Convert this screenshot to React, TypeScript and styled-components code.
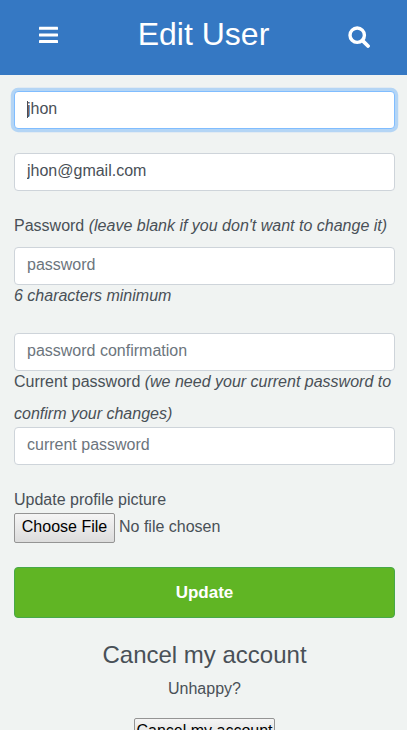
import React from "react";
import styled, { createGlobalStyle } from "styled-components";

const GlobalStyle = createGlobalStyle`
  *, *::before, *::after { box-sizing: border-box; }
  html, body { height: 100%; }
  body {
    margin: 0;
    overflow: hidden;
    background: #f0f3f2;
    color: #495057;
    font-family: "Liberation Sans", Arial, sans-serif;
    font-size: 16px;
  }
`;

const Page = styled.div`
  height: 730px;
  overflow: hidden;
`;

const Header = styled.header`
  display: flex;
  justify-content: space-between;
  align-items: flex-start;
  height: 75px;
  padding: 0 37px 0 37px;
  background: #3578c3;
  color: #fff;
`;

const Title = styled.h1`
  margin: 15px 0 0;
  font-size: 32px;
  line-height: 38px;
  font-weight: 400;
`;

const IconButton = styled.button<{ $top: number }>`
  display: flex;
  margin: ${(p) => p.$top}px 0 0;
  padding: 0;
  border: 0;
  background: none;
  color: inherit;
`;

const Form = styled.form`
  display: flex;
  flex-direction: column;
  padding: 16px 12px 0 14px;
`;

const Field = styled.div<{ $gap?: number }>`
  position: relative;
  display: flex;
  margin-bottom: ${(p) => p.$gap ?? 0}px;
`;

const TextInput = styled.input<{ $focused?: boolean }>`
  width: 100%;
  height: 38px;
  padding: 5px 12px 7px;
  border: 1px solid ${(p) => (p.$focused ? "#80bdff" : "#ced4da")};
  border-radius: 4px;
  outline: none;
  background: #fff;
  box-shadow: ${(p) => (p.$focused ? "0 0 0 3.2px rgba(0, 123, 255, 0.25)" : "none")};
  color: #495057;
  font: inherit;
  line-height: 24px;

  &::placeholder {
    color: #6c757d;
    opacity: 1;
  }
`;

const Caret = styled.span`
  position: absolute;
  left: 13px;
  top: 10px;
  width: 1px;
  height: 17px;
  background: #495057;
`;

const Label = styled.label<{ $height: number; $line?: number }>`
  display: block;
  height: ${(p) => p.$height}px;
  line-height: ${(p) => p.$line ?? 24}px;
`;

const WrappedLabel = styled(Label)`
  margin-top: -5px;
  margin-bottom: -3px;
`;

const FileRow = styled.div`
  display: flex;
  align-items: flex-start;
  gap: 4px;
  height: 30px;
  margin-bottom: 24px;
  line-height: 28px;
`;

const NativeButton = styled.button<{ $width: number }>`
  width: ${(p) => p.$width}px;
  height: 30px;
  padding: 0 0 2px;
  border: 1px solid #949494;
  border-radius: 2px;
  background: linear-gradient(#f5f5f5, #dcdcdc);
  color: #000;
  font: inherit;
  line-height: 26px;
  white-space: nowrap;
`;

const SubmitButton = styled.button`
  height: 51px;
  padding: 0;
  border: 1px solid #47a84a;
  border-radius: 4px;
  background: #60b524;
  color: #fff;
  font: inherit;
  font-size: 17px;
  font-weight: 700;
`;

const Account = styled.section`
  display: flex;
  flex-direction: column;
  align-items: center;
  padding: 22px 12px 0 14px;
`;

const AccountTitle = styled.h2`
  margin: 0;
  font-size: 24px;
  line-height: 30px;
  font-weight: 400;
`;

const Question = styled.p`
  margin: 7px 0 17px;
  line-height: 24px;
`;

const CancelButton = styled(NativeButton)`
  height: 25px;
  padding: 0;
  line-height: 23px;
`;

const MenuIcon = () => (
  <svg width="22" height="22" viewBox="0 0 22 22" fill="currentColor">
    <rect x="2" y="2.8" width="19" height="3" rx="0.4" />
    <rect x="2" y="9.5" width="19" height="3" rx="0.4" />
    <rect x="2" y="16.1" width="19" height="3" rx="0.4" />
  </svg>
);

const SearchIcon = () => (
  <svg width="22" height="22" viewBox="0 0 22 22" fill="none" stroke="currentColor">
    <circle cx="9.2" cy="9.2" r="7.2" strokeWidth="3.4" />
    <path d="M14.8 14.8L20 20" strokeWidth="3.8" strokeLinecap="round" />
  </svg>
);

export default function App() {
  return (
    <>
      <GlobalStyle />
      <Page>
        <Header>
          <IconButton $top={24} aria-label="Menu"><MenuIcon /></IconButton>
          <Title>Edit User</Title>
          <IconButton $top={26} aria-label="Search"><SearchIcon /></IconButton>
        </Header>
        <Form>
          <Field $gap={24}>
            <TextInput $focused defaultValue="jhon" aria-label="Name" />
            <Caret />
          </Field>
          <Field $gap={23}>
            <TextInput type="email" defaultValue="jhon@gmail.com" aria-label="Email" />
          </Field>
          <Label $height={33}>
            Password <em>(leave blank if you don't want to change it)</em>
          </Label>
          <Field>
            <TextInput type="password" placeholder="password" />
          </Field>
          <Label $height={48} $line={22}><em>6 characters minimum</em></Label>
          <Field>
            <TextInput type="password" placeholder="password confirmation" />
          </Field>
          <WrappedLabel $height={64} $line={32}>
            Current password <em>(we need your current password to confirm your changes)</em>
          </WrappedLabel>
          <Field $gap={23}>
            <TextInput type="password" placeholder="current password" />
          </Field>
          <Label $height={25}>Update profile picture</Label>
          <FileRow>
            <NativeButton type="button" $width={101}>Choose File</NativeButton>
            <span>No file chosen</span>
          </FileRow>
          <SubmitButton type="button">Update</SubmitButton>
        </Form>
        <Account>
          <AccountTitle>Cancel my account</AccountTitle>
          <Question>Unhappy?</Question>
          <CancelButton type="button" $width={141}>Cancel my account</CancelButton>
        </Account>
      </Page>
    </>
  );
}
